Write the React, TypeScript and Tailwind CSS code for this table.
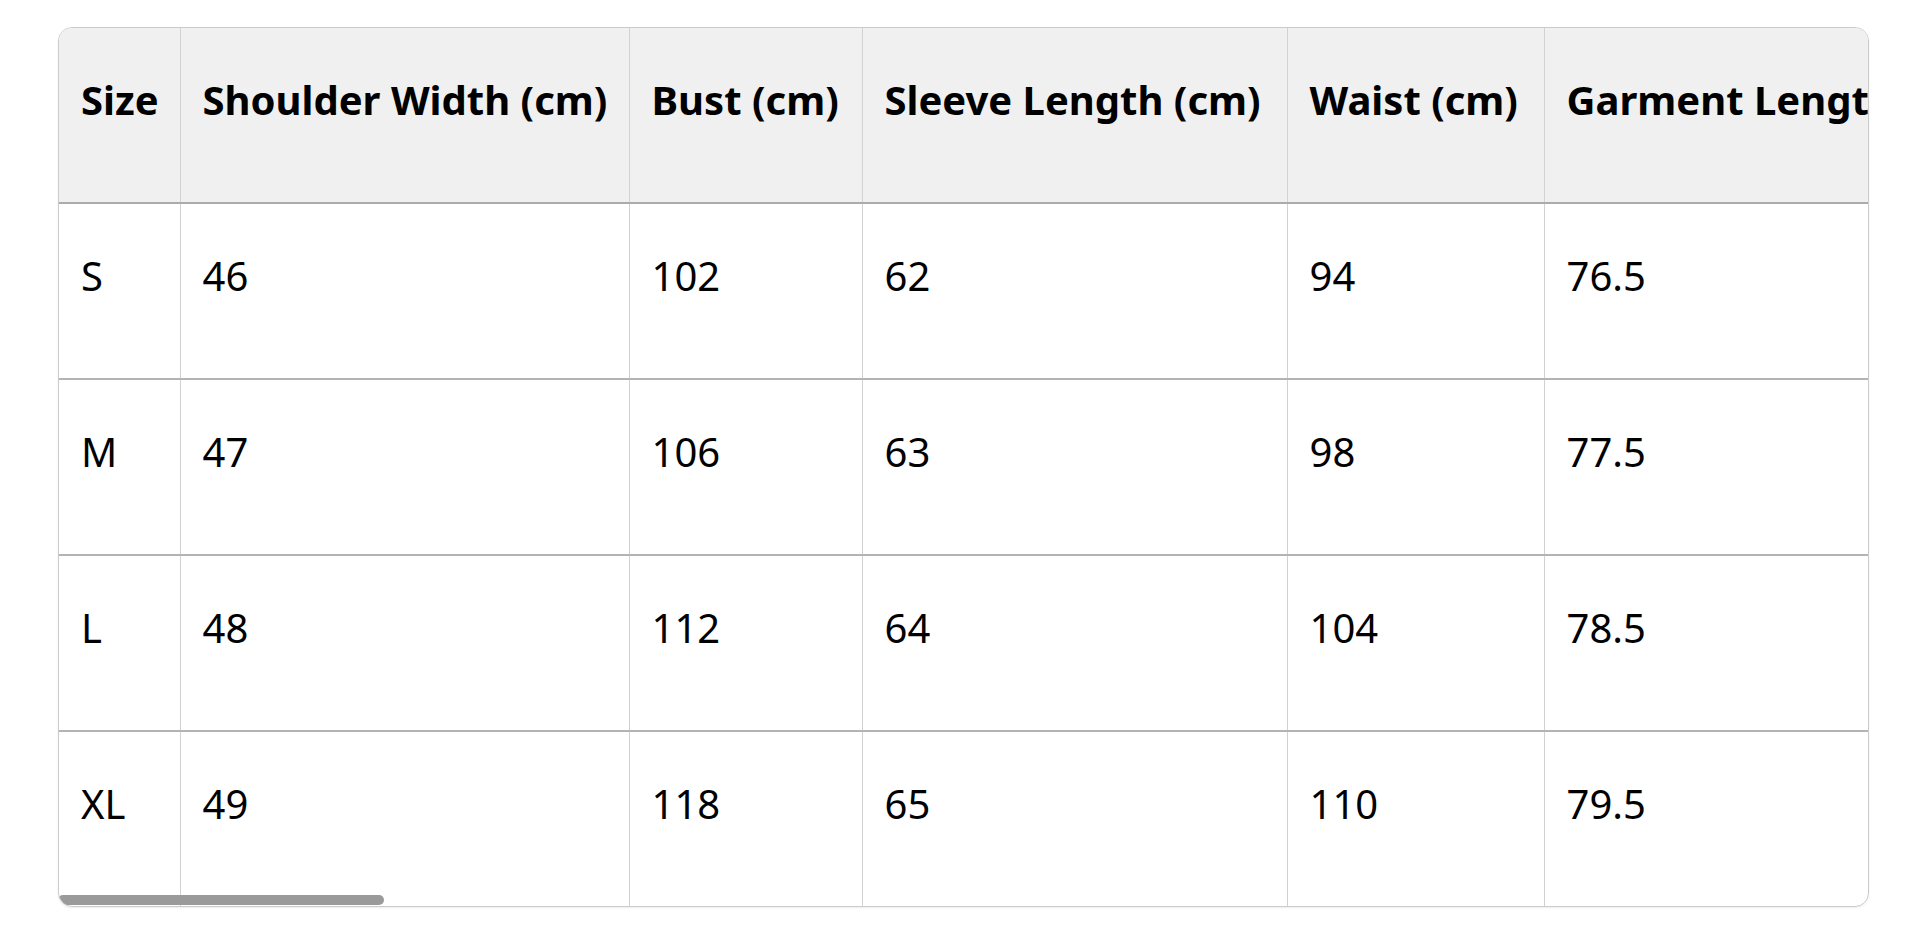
const headers = [
  "Size",
  "Shoulder Width (cm)",
  "Bust (cm)",
  "Sleeve Length (cm)",
  "Waist (cm)",
  "Garment Length (cm)",
];

const widths = [121, 449, 233, 425, 257, 520];

const rows = [
  ["S", "46", "102", "62", "94", "76.5"],
  ["M", "47", "106", "63", "98", "77.5"],
  ["L", "48", "112", "64", "104", "78.5"],
  ["XL", "49", "118", "65", "110", "79.5"],
];

export default function App() {
  return (
    <div className="min-h-[941px] bg-white pt-[27px] pl-[58px]"
      style={{ fontFamily: "'Noto Sans', Lato, sans-serif" }}>
      {/* scroll box */}
      <div className="relative w-[1811px] overflow-hidden rounded-[14px] border border-[#cbcbcb] shadow-[0_1px_2px_rgba(0,0,0,0.08)]">
        <table className="table-fixed border-collapse text-[40px] leading-[60px] text-black"
          style={{ width: widths.reduce((a, b) => a + b, 0) }}>
          <colgroup>
            {widths.map((w, i) => <col key={i} style={{ width: w }} />)}
          </colgroup>
          <thead>
            <tr className="bg-[#f0f0f0] border-b-2 border-[#ababab]">
              {headers.map((h) => (
                <th key={h}
                  className="whitespace-nowrap border-r border-[#d2d2d2] pl-[22px] pr-0 pt-[42px] pb-[72px] text-left font-bold">
                  {h}
                </th>
              ))}
            </tr>
          </thead>
          <tbody>
            {rows.map((r, ri) => (
              <tr key={r[0]} className={ri < rows.length - 1 ? "border-b-2 border-[#b4b4b4]" : ""}>
                {r.map((c, ci) => (
                  <td key={ci}
                    className="whitespace-nowrap border-r border-[#d2d2d2] pl-[22px] pt-[42px] pb-[72px] font-normal">
                    {c}
                  </td>
                ))}
              </tr>
            ))}
          </tbody>
        </table>

        {/* scrollbar thumb */}
        <div className="absolute bottom-[1px] left-[-1px] h-[10px] w-[326px] rounded-full bg-[#9a9a9a]" />
      </div>
    </div>
  );
}
